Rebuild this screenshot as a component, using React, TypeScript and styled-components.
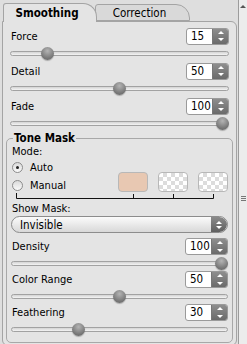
import React from "react";
import styled, { createGlobalStyle } from "styled-components";

const Global = createGlobalStyle`
  html, body { margin: 0; padding: 0; background: #dcdcdc; }
  body { font-family: "DejaVu Sans Condensed", "DejaVu Sans", sans-serif; font-size: 11px; color: #000; }
`;

const Root = styled.div`
  width: 247px;
  height: 344px;
  display: flex;
  overflow: hidden;
  background: #dedede;
`;

const Main = styled.div`
  flex: 1;
  display: flex;
  flex-direction: column;
  padding: 3px 1px 3px 2px;
`;

const TabBar = styled.div`
  display: flex;
  height: 18px;
  padding-left: 1px;
  position: relative;
  z-index: 1;
`;

const Tab = styled.div<{ $active?: boolean }>`
  width: ${(p) => (p.$active ? 94 : 95)}px;
  margin-left: ${(p) => (p.$active ? 0 : -2)}px;
  height: ${(p) => (p.$active ? 19 : 17)}px;
  margin-top: ${(p) => (p.$active ? 0 : 1)}px;
  box-sizing: border-box;
  border: 1px solid #a4a4a4;
  border-bottom: ${(p) => (p.$active ? "none" : "1px solid #a4a4a4")};
  border-radius: 3px 14px 0 0;
  background: ${(p) => (p.$active ? "#e4e4e4" : "#d9d9d9")};
  font-weight: ${(p) => (p.$active ? "bold" : "normal")};
  display: flex;
  align-items: center;
  justify-content: center;
  padding-right: 6px;
  z-index: ${(p) => (p.$active ? 2 : 1)};
  position: relative;
  font-size: 11.5px;
`;

const Panel = styled.div`
  flex: 1;
  border: 1px solid #a4a4a4;
  border-radius: 0 6px 6px 6px;
  background: #e4e4e4;
  padding: 5px 7px 2px 7px;
  display: flex;
  flex-direction: column;
`;

const LabelRow = styled.div<{ $compact?: boolean }>`
  display: flex;
  align-items: center;
  justify-content: space-between;
  height: ${(p) => (p.$compact ? 17 : 18)}px;
`;

const Label = styled.span`
  padding-left: 1px;
`;

const Spin = styled.div`
  width: 43px;
  height: 17px;
  box-sizing: border-box;
  border: 1px solid #9a9a9a;
  border-radius: 3px;
  background: #fff;
  display: flex;
  overflow: hidden;
`;

const SpinValue = styled.span`
  flex: 1;
  padding-left: 4px;
  line-height: 15px;
  font-size: 11.5px;
`;

const SpinButton = styled.div`
  width: 15px;
  background: linear-gradient(#8e8e8e, #6a6a6a);
  display: flex;
  flex-direction: column;
  align-items: center;
  justify-content: space-around;
  border-left: 1px solid #777;
`;

const Arrow = styled.div<{ $up?: boolean }>`
  width: 0;
  height: 0;
  border-left: 3px solid transparent;
  border-right: 3px solid transparent;
  ${(p) => (p.$up ? "border-bottom: 3px solid #fff;" : "border-top: 3px solid #fff;")}
`;

const SliderWrap = styled.div<{ $compact?: boolean }>`
  position: relative;
  height: ${(p) => (p.$compact ? 16 : 17)}px;
  display: flex;
  align-items: center;
`;

const Track = styled.div`
  flex: 1;
  height: 5px;
  box-sizing: border-box;
  border: 1px solid #a2a2a2;
  border-radius: 3px;
  background: linear-gradient(#d4d4d4, #f4f4f4);
`;

const Thumb = styled.div<{ $compact?: boolean }>`
  position: absolute;
  top: ${(p) => (p.$compact ? 1.5 : 2)}px;
  width: 13px;
  height: 13px;
  border-radius: 50%;
  background: radial-gradient(circle at 50% 30%, #b4b4b4, #7c7c7c 60%, #5c5c5c);
  box-shadow: 0 1px 1px rgba(0,0,0,0.25);
`;

const Group = styled.fieldset`
  margin: 0 -4px 0 -4px;
  padding: 0 4px 5px 4px;
  border: 1px solid #a8a8a8;
  border-radius: 5px;
  display: flex;
  flex-direction: column;
  min-width: 0;
`;

const Legend = styled.legend`
  font-weight: bold;
  font-size: 11.5px;
  padding: 0 1px;
  margin-left: 2px;
  line-height: 12px;
`;

const Text = styled.div<{ $gap?: number }>`
  height: 15px;
  line-height: 15px;
  padding-left: 1px;
  margin-top: ${(p) => p.$gap ?? 0}px;
`;

const ModeArea = styled.div`
  display: flex;
  justify-content: space-between;
  align-items: flex-end;
`;

const Radios = styled.div`
  display: flex;
  flex-direction: column;
  gap: 5px;
  padding-top: 2px;
`;

const RadioRow = styled.div`
  display: flex;
  align-items: center;
  gap: 7px;
  height: 13px;
  padding-left: 1px;
`;

const RadioCircle = styled.div<{ $checked?: boolean }>`
  width: 11px;
  height: 11px;
  box-sizing: border-box;
  border: 1px solid #8c8c8c;
  border-radius: 50%;
  background: linear-gradient(#dadada, #fafafa);
  display: flex;
  align-items: center;
  justify-content: center;
  &::after {
    content: "";
    display: ${(p) => (p.$checked ? "block" : "none")};
    width: 3px;
    height: 3px;
    border-radius: 50%;
    background: #222;
  }
`;

const Swatches = styled.div`
  display: flex;
  gap: 10px;
`;

const Swatch = styled.div<{ $color?: string }>`
  width: 30px;
  height: 20px;
  box-sizing: border-box;
  border: 1px solid #b8b8b8;
  border-radius: 4px;
  background: ${(p) =>
    p.$color
      ? p.$color
      : "repeating-conic-gradient(#dcdcdc 0% 25%, #ffffff 0% 50%) 0 0 / 8px 8px"};
`;

const Bracket = styled.svg`
  display: block;
  margin-top: 1px;
`;

const Dropdown = styled.div`
  height: 17px;
  box-sizing: border-box;
  border: 1px solid #8c8c8c;
  border-radius: 9px;
  background: linear-gradient(#fbfbfb, #d8d8d8);
  display: flex;
  align-items: center;
  overflow: hidden;
  margin-bottom: 5px;
`;

const DropText = styled.span`
  flex: 1;
  padding-left: 8px;
  font-size: 11.5px;
`;

const DropButton = styled.div`
  width: 16px;
  height: 100%;
  background: linear-gradient(#8a8a8a, #606060);
  display: flex;
  flex-direction: column;
  align-items: center;
  justify-content: center;
  gap: 2px;
  border-radius: 0 9px 9px 0;
`;

const ScrollBar = styled.div`
  width: 9px;
  border-left: 1px solid #9c9c9c;
  background: #ececec;
  display: flex;
  flex-direction: column;
  align-items: center;
`;

const ScrollArrow = styled.div`
  margin-top: 5px;
  width: 0;
  height: 0;
  border-left: 3px solid transparent;
  border-right: 3px solid transparent;
  border-bottom: 3px solid #555;
`;

const Grip = styled.div`
  margin-top: 188px;
  width: 5px;
  height: 5px;
  background: repeating-linear-gradient(#777 0 1px, transparent 1px 2px);
`;

function Slider({ value, compact }: { value: number; compact?: boolean }) {
  return (
    <SliderWrap $compact={compact}>
      <Track />
      <Thumb $compact={compact} style={{ left: `calc((100% - 13px) * ${value / 100})` }} />
    </SliderWrap>
  );
}

function SpinBox({ value }: { value: number }) {
  return (
    <Spin>
      <SpinValue>{value}</SpinValue>
      <SpinButton>
        <Arrow $up />
        <Arrow />
      </SpinButton>
    </Spin>
  );
}

function Control({ label, value, compact }: { label: string; value: number; compact?: boolean }) {
  return (
    <>
      <LabelRow $compact={compact}>
        <Label>{label}</Label>
        <SpinBox value={value} />
      </LabelRow>
      <Slider value={value} compact={compact} />
    </>
  );
}

export default function App() {
  return (
    <>
      <Global />
      <Root>
        <Main>
          <TabBar>
            <Tab $active>Smoothing</Tab>
            <Tab>Correction</Tab>
          </TabBar>
          <Panel>
            <Control label="Force" value={15} />
            <Control label="Detail" value={50} />
            <Control label="Fade" value={100} />
            <Group>
              <Legend>Tone Mask</Legend>
              <Text>Mode:</Text>
              <ModeArea>
                <Radios>
                  <RadioRow>
                    <RadioCircle $checked />
                    <span>Auto</span>
                  </RadioRow>
                  <RadioRow>
                    <RadioCircle />
                    <span>Manual</span>
                  </RadioRow>
                </Radios>
                <Swatches>
                  <Swatch $color="#e8c8b2" />
                  <Swatch />
                  <Swatch />
                </Swatches>
              </ModeArea>
              <Bracket width="217" height="6" viewBox="0 0 217 6">
                <path d="M5.5 0V5.5H202.5M122.5 1V5.5M162.5 1V5.5M202.5 1V5.5" stroke="#111" strokeWidth="1" fill="none" />
              </Bracket>
              <Text $gap={2}>Show Mask:</Text>
              <Dropdown>
                <DropText>Invisible</DropText>
                <DropButton>
                  <Arrow $up />
                  <Arrow />
                </DropButton>
              </Dropdown>
              <Control label="Density" value={100} compact />
              <Control label="Color Range" value={50} compact />
              <Control label="Feathering" value={30} compact />
            </Group>
          </Panel>
        </Main>
        <ScrollBar>
          <ScrollArrow />
          <Grip />
        </ScrollBar>
      </Root>
    </>
  );
}
